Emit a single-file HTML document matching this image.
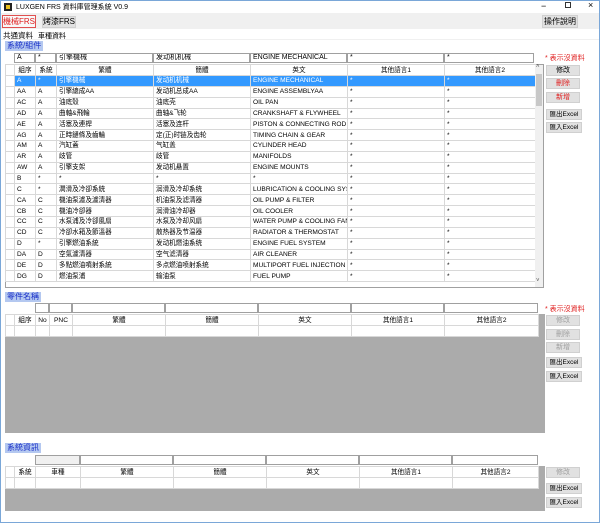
<!DOCTYPE html>
<html><head><meta charset="utf-8"><style>
*{box-sizing:border-box;margin:0;padding:0}
body{width:600px;height:523px;overflow:hidden;background:#fff;font-family:"Liberation Sans","Noto Sans CJK TC",sans-serif;font-size:7px;color:#000;position:relative}
.a{position:absolute}
.win{left:0;top:0;width:600px;height:523px;border:1px solid #7aa7d8}
.lbl{background:#b4c8f0;color:#1a30c8;font-size:8px;line-height:10px;padding:0 2px}
.inp{border:1px solid #a0a0a0;background:#fff;height:10px;line-height:8px;padding-left:2px;white-space:nowrap;overflow:hidden}
table{border-collapse:collapse;table-layout:fixed;position:absolute}
td{border:1px solid #d8d8d8;height:10.85px;line-height:9px;padding:0 2px;white-space:nowrap;overflow:hidden;font-size:6.6px}
tr.h td{text-align:center;background:#fff;height:11px}
tr.s td{background:#3399ff;color:#fff}
td.rh{padding:0}
.btn{background:#e1e1e1;border:1px solid #d0d0d0;text-align:center;line-height:9px;font-size:7px;height:11px}
.red{color:#e02020}
.dis{color:#a0a0a0}
.gray{background:#ababab}
</style></head><body>
<div class="a win"></div>
<div class="a" style="left:4px;top:3px;width:8px;height:8px;background:#222"></div>
<div class="a" style="left:6px;top:5px;width:4px;height:4px;background:#e8c020"></div>
<div class="a" style="left:16px;top:2px;font-size:7px">LUXGEN FRS 資料庫管理系統 V0.9</div>
<div class="a" style="left:541px;top:1px;font-size:9px">−</div>
<div class="a" style="left:565px;top:2px;width:6px;height:6px;border:1px solid #333"></div>
<div class="a" style="left:588px;top:0px;font-size:9px">×</div>
<div class="a" style="left:1px;top:13px;width:598px;height:27px;background:#f0f0f0"></div>
<div class="a btn red" style="left:2px;top:15px;width:34px;height:13px;border:1px solid #e05050;background:#f8f8f8;line-height:11px;font-size:8px">機械FRS</div>
<div class="a btn" style="left:42px;top:16px;width:34px;height:12px;line-height:10px;font-size:8px">烤漆FRS</div>
<div class="a btn" style="left:542px;top:15px;width:36px;height:13px;line-height:11px;font-size:8px">操作說明</div>
<div class="a" style="left:1px;top:29px;width:598px;height:10px;background:#fff"></div>
<div class="a" style="left:3px;top:30px;font-size:7.5px">共通資料</div>
<div class="a" style="left:38px;top:31px;font-size:7px">車種資料</div>

<div class="a lbl" style="left:5px;top:41px">系統/組件</div>
<div class="a inp" style="left:14px;top:53px;width:21px">A</div>
<div class="a inp" style="left:35px;top:53px;width:21px">*</div>
<div class="a inp" style="left:56px;top:53px;width:97px">引擎機械</div>
<div class="a inp" style="left:153px;top:53px;width:97px">发动机机械</div>
<div class="a inp" style="left:250px;top:53px;width:97px">ENGINE MECHANICAL</div>
<div class="a inp" style="left:347px;top:53px;width:97px">*</div>
<div class="a inp" style="left:444px;top:53px;width:90px">*</div>
<div class="a red" style="left:545px;top:53px">* 表示沒資料</div>

<div class="a" style="left:5px;top:64px;width:539px;height:224px;border:1px solid #a0a0a0"></div>
<table style="left:5px;top:64px;width:530px">
<colgroup><col style="width:9px"><col style="width:21px"><col style="width:21px"><col style="width:97px"><col style="width:97px"><col style="width:97px"><col style="width:97px"><col style="width:91px"></colgroup>
<tr class="h"><td class="rh"></td><td>組序</td><td>系統</td><td>繁體</td><td>簡體</td><td>英文</td><td>其他語言1</td><td>其他語言2</td></tr>
<tr class="s"><td class="rh" style="background:#fff"></td><td>A</td><td>*</td><td>引擎機械</td><td>发动机机械</td><td>ENGINE MECHANICAL</td><td>*</td><td>*</td></tr>
<tr><td class="rh"></td><td>AA</td><td>A</td><td>引擎總成AA</td><td>发动机总成AA</td><td>ENGINE ASSEMBLYAA</td><td>*</td><td>*</td></tr>
<tr><td class="rh"></td><td>AC</td><td>A</td><td>油底殼</td><td>油底壳</td><td>OIL PAN</td><td>*</td><td>*</td></tr>
<tr><td class="rh"></td><td>AD</td><td>A</td><td>曲軸&amp;飛輪</td><td>曲轴&amp;飞轮</td><td>CRANKSHAFT &amp; FLYWHEEL</td><td>*</td><td>*</td></tr>
<tr><td class="rh"></td><td>AE</td><td>A</td><td>活塞及連桿</td><td>活塞及连杆</td><td>PISTON &amp; CONNECTING ROD</td><td>*</td><td>*</td></tr>
<tr><td class="rh"></td><td>AG</td><td>A</td><td>正時鏈條及齒輪</td><td>定(正)时链及齿轮</td><td>TIMING CHAIN &amp; GEAR</td><td>*</td><td>*</td></tr>
<tr><td class="rh"></td><td>AM</td><td>A</td><td>汽缸蓋</td><td>气缸盖</td><td>CYLINDER HEAD</td><td>*</td><td>*</td></tr>
<tr><td class="rh"></td><td>AR</td><td>A</td><td>歧管</td><td>歧管</td><td>MANIFOLDS</td><td>*</td><td>*</td></tr>
<tr><td class="rh"></td><td>AW</td><td>A</td><td>引擎支架</td><td>发动机悬置</td><td>ENGINE MOUNTS</td><td>*</td><td>*</td></tr>
<tr><td class="rh"></td><td>B</td><td>*</td><td>*</td><td>*</td><td>*</td><td>*</td><td>*</td></tr>
<tr><td class="rh"></td><td>C</td><td>*</td><td>潤滑及冷卻系統</td><td>润滑及冷却系统</td><td>LUBRICATION &amp; COOLING SYS...</td><td>*</td><td>*</td></tr>
<tr><td class="rh"></td><td>CA</td><td>C</td><td>機油泵濾及濾清器</td><td>机油泵及滤清器</td><td>OIL PUMP &amp; FILTER</td><td>*</td><td>*</td></tr>
<tr><td class="rh"></td><td>CB</td><td>C</td><td>機油冷卻器</td><td>润滑油冷却器</td><td>OIL COOLER</td><td>*</td><td>*</td></tr>
<tr><td class="rh"></td><td>CC</td><td>C</td><td>水泵浦及冷卻風扇</td><td>水泵及冷却风扇</td><td>WATER PUMP &amp; COOLING FAN</td><td>*</td><td>*</td></tr>
<tr><td class="rh"></td><td>CD</td><td>C</td><td>冷卻水箱及節溫器</td><td>散热器及节温器</td><td>RADIATOR &amp; THERMOSTAT</td><td>*</td><td>*</td></tr>
<tr><td class="rh"></td><td>D</td><td>*</td><td>引擎燃油系統</td><td>发动机燃油系统</td><td>ENGINE FUEL SYSTEM</td><td>*</td><td>*</td></tr>
<tr><td class="rh"></td><td>DA</td><td>D</td><td>空氣濾清器</td><td>空气滤清器</td><td>AIR CLEANER</td><td>*</td><td>*</td></tr>
<tr><td class="rh"></td><td>DE</td><td>D</td><td>多點燃油噴射系統</td><td>多点燃油喷射系统</td><td>MULTIPORT FUEL INJECTION S...</td><td>*</td><td>*</td></tr>
<tr><td class="rh"></td><td>DG</td><td>D</td><td>燃油泵浦</td><td>输油泵</td><td>FUEL PUMP</td><td>*</td><td>*</td></tr>
</table>
<div class="a" style="left:535px;top:65px;width:8px;height:222px;background:#f0f0f0"></div>
<div class="a" style="left:536px;top:74px;width:6px;height:32px;background:#c8c8c8"></div>
<div class="a" style="left:536px;top:64px;font-size:6px;color:#555">˄</div>
<div class="a" style="left:536px;top:278px;font-size:6px;color:#555">˅</div>
<div class="a btn" style="left:546px;top:65px;width:34px">修改</div>
<div class="a btn red" style="left:546px;top:78px;width:34px">刪除</div>
<div class="a btn red" style="left:546px;top:92px;width:34px">新增</div>
<div class="a btn" style="left:546px;top:109px;width:36px;font-size:6.5px">匯出Excel</div>
<div class="a btn" style="left:546px;top:122px;width:36px;font-size:6.5px">匯入Excel</div>

<div class="a lbl" style="left:5px;top:292px">零件名稱</div>
<div class="a inp" style="left:35px;top:303px;width:14px"></div>
<div class="a inp" style="left:49px;top:303px;width:23px"></div>
<div class="a inp" style="left:72px;top:303px;width:93px"></div>
<div class="a inp" style="left:165px;top:303px;width:93px"></div>
<div class="a inp" style="left:258px;top:303px;width:93px"></div>
<div class="a inp" style="left:351px;top:303px;width:93px"></div>
<div class="a inp" style="left:444px;top:303px;width:94px"></div>
<div class="a red" style="left:545px;top:304px">* 表示沒資料</div>
<div class="a gray" style="left:5px;top:314px;width:540px;height:119px"></div>
<table style="left:5px;top:314px;width:533px">
<colgroup><col style="width:9px"><col style="width:21px"><col style="width:14px"><col style="width:23px"><col style="width:93px"><col style="width:93px"><col style="width:93px"><col style="width:93px"><col style="width:94px"></colgroup>
<tr class="h"><td class="rh"></td><td>組序</td><td>No</td><td>PNC</td><td>繁體</td><td>簡體</td><td>英文</td><td>其他語言1</td><td>其他語言2</td></tr>
<tr style="background:#fff"><td></td><td></td><td></td><td></td><td></td><td></td><td></td><td></td><td></td></tr>
</table>
<div class="a btn dis" style="left:546px;top:315px;width:34px">修改</div>
<div class="a btn dis" style="left:546px;top:329px;width:34px">刪除</div>
<div class="a btn dis" style="left:546px;top:342px;width:34px">新增</div>
<div class="a btn" style="left:546px;top:357px;width:36px;font-size:6.5px">匯出Excel</div>
<div class="a btn" style="left:546px;top:371px;width:36px;font-size:6.5px">匯入Excel</div>

<div class="a lbl" style="left:5px;top:443px">系統資訊</div>
<div class="a inp" style="left:35px;top:455px;width:45px;background:#f0f0f0"></div>
<div class="a inp" style="left:80px;top:455px;width:93px"></div>
<div class="a inp" style="left:173px;top:455px;width:93px"></div>
<div class="a inp" style="left:266px;top:455px;width:93px"></div>
<div class="a inp" style="left:359px;top:455px;width:93px"></div>
<div class="a inp" style="left:452px;top:455px;width:86px"></div>
<div class="a gray" style="left:5px;top:466px;width:540px;height:45px"></div>
<table style="left:5px;top:466px;width:533px">
<colgroup><col style="width:9px"><col style="width:21px"><col style="width:45px"><col style="width:93px"><col style="width:93px"><col style="width:93px"><col style="width:93px"><col style="width:86px"></colgroup>
<tr class="h"><td class="rh"></td><td>系統</td><td>車種</td><td>繁體</td><td>簡體</td><td>英文</td><td>其他語言1</td><td>其他語言2</td></tr>
<tr style="background:#fff"><td></td><td></td><td></td><td></td><td></td><td></td><td></td><td></td></tr>
</table>
<div class="a btn dis" style="left:546px;top:467px;width:34px">修改</div>
<div class="a btn" style="left:546px;top:483px;width:36px;font-size:6.5px">匯出Excel</div>
<div class="a btn" style="left:546px;top:497px;width:36px;font-size:6.5px">匯入Excel</div>
</body></html>
